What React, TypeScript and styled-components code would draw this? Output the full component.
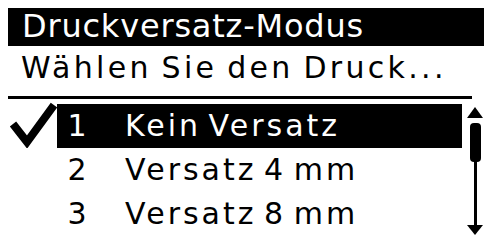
import React from "react";
import styled, { createGlobalStyle } from "styled-components";

const Global = createGlobalStyle`
  html, body { margin: 0; padding: 0; background: #ffffff; }
  body { font-family: "DejaVu Sans", "Liberation Sans", sans-serif; -webkit-font-smoothing: none; }
`;

const Screen = styled.div`
  width: 489px;
  height: 237px;
  box-sizing: border-box;
  padding: 8px 5px 0 8px;
  display: flex;
  flex-direction: column;
  overflow: hidden;
  color: #000;
`;

const TitleBar = styled.div`
  width: 476px;
  height: 38px;
  background: #000;
  color: #fff;
  box-sizing: border-box;
  padding: 0 0 2px 14px;
  font-size: 32px;
  line-height: 36px;
  letter-spacing: 0.8px;
  white-space: nowrap;
`;

const Subtitle = styled.div`
  padding: 4px 0 0 13px;
  font-size: 30px;
  line-height: 35px;
  letter-spacing: 3.3px;
  word-spacing: -3px;
  white-space: nowrap;
`;

const Divider = styled.div`
  margin-top: 11px;
  width: 464px;
  height: 3px;
  background: #000;
`;

const ListArea = styled.div`
  margin-top: 5px;
  display: flex;
  align-items: flex-start;
`;

const CheckCell = styled.div`
  width: 49px;
  height: 44px;
  display: flex;
  align-items: flex-start;
`;

const Rows = styled.div`
  width: 405px;
  display: flex;
  flex-direction: column;
`;

const Row = styled.div<{ $selected?: boolean }>`
  height: 44px;
  display: flex;
  align-items: center;
  background: ${(p) => (p.$selected ? "#000" : "transparent")};
  color: ${(p) => (p.$selected ? "#fff" : "#000")};
  font-size: 30px;
  line-height: 44px;
  letter-spacing: 3px;
  white-space: nowrap;
`;

const Num = styled.span`
  width: 40px;
  text-align: center;
  letter-spacing: 0;
`;

const Label = styled.span`
  margin-left: 28px;
  word-spacing: -5px;
`;

const ScrollCol = styled.div`
  margin-left: 4px;
  margin-top: 3px;
  width: 18px;
  height: 128px;
`;

function Check() {
  return (
    <svg width="49" height="48" viewBox="0 0 49 48" style={{ marginTop: -4 }}>
      <polyline
        points="5,24 19,42 46,5"
        fill="none"
        stroke="#000"
        strokeWidth="8"
        strokeLinejoin="miter"
      />
    </svg>
  );
}

function Scrollbar() {
  return (
    <svg width="18" height="128" viewBox="0 0 18 128">
      <polygon points="1,11 17,11 9,0" fill="#000" />
      <rect x="4" y="16" width="11" height="39" rx="4" fill="#000" />
      <rect x="8" y="50" width="3" height="70" fill="#000" />
      <polygon points="1,118 17,118 9,128" fill="#000" />
    </svg>
  );
}

export default function App() {
  const items = [
    { n: "1", label: "Kein Versatz" },
    { n: "2", label: "Versatz 4 mm" },
    { n: "3", label: "Versatz 8 mm" },
  ];
  return (
    <>
      <Global />
      <Screen>
        <TitleBar>Druckversatz-Modus</TitleBar>
        <Subtitle>Wählen Sie den Druck...</Subtitle>
        <Divider />
        <ListArea>
          <CheckCell>
            <Check />
          </CheckCell>
          <Rows>
            {items.map((it, i) => (
              <Row key={it.n} $selected={i === 0}>
                <Num>{it.n}</Num>
                <Label>{it.label}</Label>
              </Row>
            ))}
          </Rows>
          <ScrollCol>
            <Scrollbar />
          </ScrollCol>
        </ListArea>
      </Screen>
    </>
  );
}
